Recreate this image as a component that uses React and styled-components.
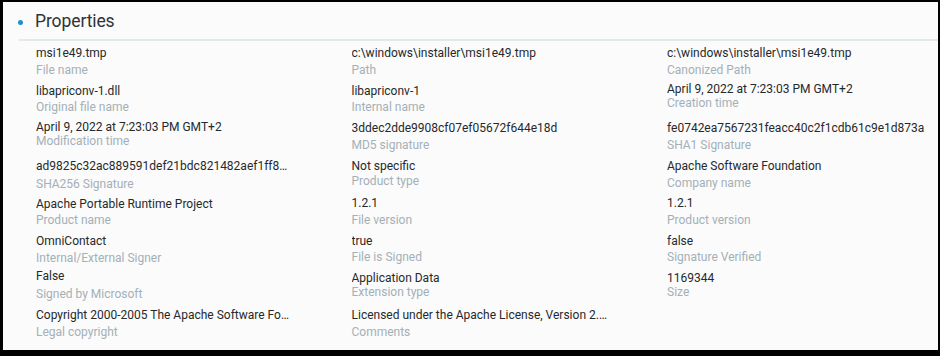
import styled, { createGlobalStyle } from 'styled-components';

const GlobalStyle = createGlobalStyle`
  html, body {
    margin: 0;
    padding: 0;
    background: #000;
  }
  body {
    font-family: Roboto, "Liberation Sans", Arial, sans-serif;
  }
`;

const Frame = styled.div`
  width: 940px;
  height: 356px;
  box-sizing: border-box;
  padding: 2px 2px 6px 3px;
  display: flex;
`;

const Panel = styled.section`
  flex: 1;
  background: #fbfbfb;
  display: flex;
  flex-direction: column;
  overflow: hidden;
`;

const Header = styled.div`
  height: 37px;
  display: flex;
  align-items: center;
  gap: 12px;
  padding-left: 15px;
  padding-top: 1px;
  box-sizing: border-box;
`;

const Dot = styled.span`
  width: 5px;
  height: 5px;
  border-radius: 50%;
  background: #1f8fd3;
  margin-top: 2px;
`;

const Title = styled.h2`
  margin: 0;
  font-size: 17.5px;
  font-weight: 400;
  color: #2e3336;
  letter-spacing: -0.1px;
`;

const Divider = styled.div`
  height: 2px;
  margin-left: 16px;
  background: #e2e9ed;
`;

const Grid = styled.div`
  display: grid;
  grid-template-columns: repeat(3, 315.5px);
  grid-auto-rows: 37.5px;
  padding: 4px 0 0 33px;
`;

const Field = styled.div`
  display: flex;
  flex-direction: column;
  margin-top: ${(p) => p.$shift || 0}px;
`;

const Value = styled.div`
  font-size: 12px;
  line-height: 16px;
  color: #26292b;
  white-space: nowrap;
  overflow: hidden;
  text-overflow: ellipsis;
  max-width: ${(p) => (p.$wide ? 262 : 257)}px;
`;

const Label = styled.div`
  font-size: 12px;
  line-height: 16px;
  color: #a3b0b8;
  margin-top: ${(p) => (p.$gap ?? 17) - 16}px;
  white-space: nowrap;
`;

const rows = [
  [
    { v: 'msi1e49.tmp', l: 'File name' },
    { v: 'c:\\windows\\installer\\msi1e49.tmp', l: 'Path' },
    { v: 'c:\\windows\\installer\\msi1e49.tmp', l: 'Canonized Path' },
  ],
  [
    { v: 'libapriconv-1.dll', l: 'Original file name', g: 16 },
    { v: 'libapriconv-1', l: 'Internal name', g: 16 },
    { v: 'April 9, 2022 at 7:23:03 PM GMT+2', l: 'Creation time', s: -2, g: 14 },
  ],
  [
    { v: 'April 9, 2022 at 7:23:03 PM GMT+2', l: 'Modification time', s: -1, g: 14 },
    { v: '3ddec2dde9908cf07ef05672f644e18d', l: 'MD5 signature' },
    { v: 'fe0742ea7567231feacc40c2f1cdb61c9e1d873a', l: 'SHA1 Signature' },
  ],
  [
    { v: 'ad9825c32ac889591def21bdc821482aef1ff8c3f7d8a4e1b55d91e0a6c27f0b', l: 'SHA256 Signature', g: 18 },
    { v: 'Not specific', l: 'Product type', g: 15 },
    { v: 'Apache Software Foundation', l: 'Company name' },
  ],
  [
    { v: 'Apache Portable Runtime Project', l: 'Product name', s: 1, g: 16 },
    { v: '1.2.1', l: 'File version' },
    { v: '1.2.1', l: 'Product version' },
  ],
  [
    { v: 'OmniContact', l: 'Internal/External Signer' },
    { v: 'true', l: 'File is Signed', g: 16 },
    { v: 'false', l: 'Signature Verified', g: 16 },
  ],
  [
    { v: 'False', l: 'Signed by Microsoft', s: -2, g: 18 },
    { v: 'Application Data', l: 'Extension type', g: 14 },
    { v: '1169344', l: 'Size', g: 14 },
  ],
  [
    { v: 'Copyright 2000-2005 The Apache Software Foundation or its licensors', l: 'Legal copyright', s: -1 },
    { v: 'Licensed under the Apache License, Version 2.0 (the "License")', l: 'Comments', s: -1 },
    null,
  ],
];

export default function App() {
  return (
    <>
      <GlobalStyle />
      <Frame>
        <Panel>
          <Header>
            <Dot />
            <Title>Properties</Title>
          </Header>
          <Divider />
          <Grid>
            {rows.flatMap((row, r) =>
              row.map((f, c) =>
                f ? (
                  <Field key={`${r}-${c}`} $shift={f.s}>
                    <Value title={f.v} $wide={c === 2}>{f.v}</Value>
                    <Label $gap={f.g}>{f.l}</Label>
                  </Field>
                ) : (
                  <div key={`${r}-${c}`} />
                )
              )
            )}
          </Grid>
        </Panel>
      </Frame>
    </>
  );
}
